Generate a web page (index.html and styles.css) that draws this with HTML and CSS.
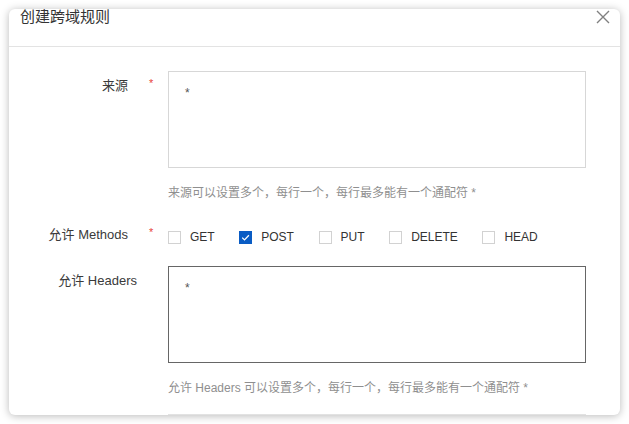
FILE: index.html
```html
<!DOCTYPE html>
<html lang="zh">
<head>
<meta charset="utf-8">
<title>创建跨域规则</title>
<link rel="stylesheet" href="styles.css">
</head>
<body>
<div class="modal">
  <div class="modal-header">
    <h2 class="modal-title">创建跨域规则</h2>
    <button class="close" aria-label="关闭">
      <svg width="14" height="14" viewBox="0 0 14 14"><path d="M1 1 L13 13 M13 1 L1 13" stroke="#808080" stroke-width="1.4" fill="none"/></svg>
    </button>
  </div>
  <div class="modal-body">
    <div class="form-row">
      <label class="label label-req">来源</label>
      <span class="req">*</span>
      <div class="control">
        <textarea class="area">*</textarea>
        <p class="help">来源可以设置多个，每行一个，每行最多能有一个通配符 *</p>
      </div>
    </div>
    <div class="form-row row-methods">
      <label class="label label-req label-methods">允许 Methods</label>
      <span class="req req-methods">*</span>
      <div class="control checks">
        <label class="check"><span class="box"></span>GET</label>
        <label class="check"><span class="box checked"><svg width="13" height="13" viewBox="0 0 13 13"><path d="M3.2 6.6 L5.5 8.9 L9.9 4.3" stroke="#fff" stroke-width="1.3" fill="none"/></svg></span>POST</label>
        <label class="check"><span class="box"></span>PUT</label>
        <label class="check"><span class="box"></span>DELETE</label>
        <label class="check"><span class="box"></span>HEAD</label>
      </div>
    </div>
    <div class="form-row">
      <label class="label">允许 Headers</label>
      <span class="req empty"></span>
      <div class="control">
        <textarea class="area area-active">*</textarea>
        <p class="help">允许 Headers 可以设置多个，每行一个，每行最多能有一个通配符 *</p>
      </div>
    </div>
    <div class="form-row">
      <span class="label"></span>
      <span class="req empty"></span>
      <div class="control">
        <textarea class="area area-next"></textarea>
      </div>
    </div>
  </div>
</div>
</body>
</html>
```

FILE: styles.css
```css
html, body {
  margin: 0;
  padding: 0;
  background: #ffffff;
  font-family: "Liberation Sans", "Noto Sans CJK SC", sans-serif;
  color: #333;
}
body {
  padding: 9px 9px 0 9px;
  height: 424px;
  box-sizing: border-box;
  overflow: hidden;
}
.modal {
  width: 611px;
  height: 406px;
  background: #fff;
  border-radius: 6px;
  box-shadow: 0 1px 8px rgba(0, 0, 0, 0.28);
  overflow: hidden;
  display: flex;
  flex-direction: column;
}
.modal-header {
  height: 37px;
  flex: none;
  border-bottom: 1px solid #e3e3e3;
  display: flex;
  justify-content: space-between;
  align-items: flex-start;
  padding: 0 10px 0 11px;
}
.modal-title {
  margin: -2px 0 0 0;
  font-size: 15px;
  line-height: 20px;
  font-weight: normal;
  color: #333;
}
.close {
  border: 0;
  background: none;
  padding: 0;
  margin-top: 1px;
  width: 14px;
  height: 14px;
  line-height: 0;
}
.modal-body {
  padding-top: 24px;
}
.form-row {
  display: grid;
  grid-template-columns: 128px 31px 418px;
  align-items: start;
}
.label {
  font-size: 13px;
  line-height: 18px;
  text-align: right;
  padding-top: 6px;
  color: #3a3a3a;
}
.label-req {
  padding-right: 9px;
}
.req {
  color: #e8423b;
  font-size: 11px;
  line-height: 14px;
  padding-top: 5px;
  padding-left: 12px;
}
.req-methods {
  padding-top: 4px;
}
.control {
  display: flex;
  flex-direction: column;
}
.area {
  display: block;
  width: 418px;
  height: 97px;
  box-sizing: border-box;
  border: 1px solid #d7d7d7;
  padding: 13px 16px 11px;
  margin: 0;
  resize: none;
  font-family: "Liberation Sans", sans-serif;
  font-size: 12px;
  line-height: 16px;
  color: #555;
  outline: none;
}
.area-active {
  border-color: #666;
}
.area-next {
  border-color: #e2e2e2;
}
.help {
  margin: 0;
  padding: 16px 0 17px;
  font-size: 12px;
  line-height: 18px;
  color: #8f8f8f;
}
.row-methods {
  padding-top: 2px;
  margin-bottom: 13px;
}
.row-methods .label {
  padding-top: 5px;
}
.checks {
  flex-direction: row;
  align-items: center;
  gap: 24.6px;
  height: 32px;
}
.check {
  display: flex;
  align-items: center;
  gap: 9px;
  font-size: 12px;
  color: #333;
}
.box {
  width: 13px;
  height: 13px;
  box-sizing: border-box;
  border: 1px solid #d2d2d2;
  background: #fff;
  display: inline-block;
  line-height: 0;
}
.box.checked {
  background: #0a5cc4;
  border-color: #0a5cc4;
  position: relative;
}
.box.checked svg {
  position: absolute;
  left: -1px;
  top: -1px;
}
```
